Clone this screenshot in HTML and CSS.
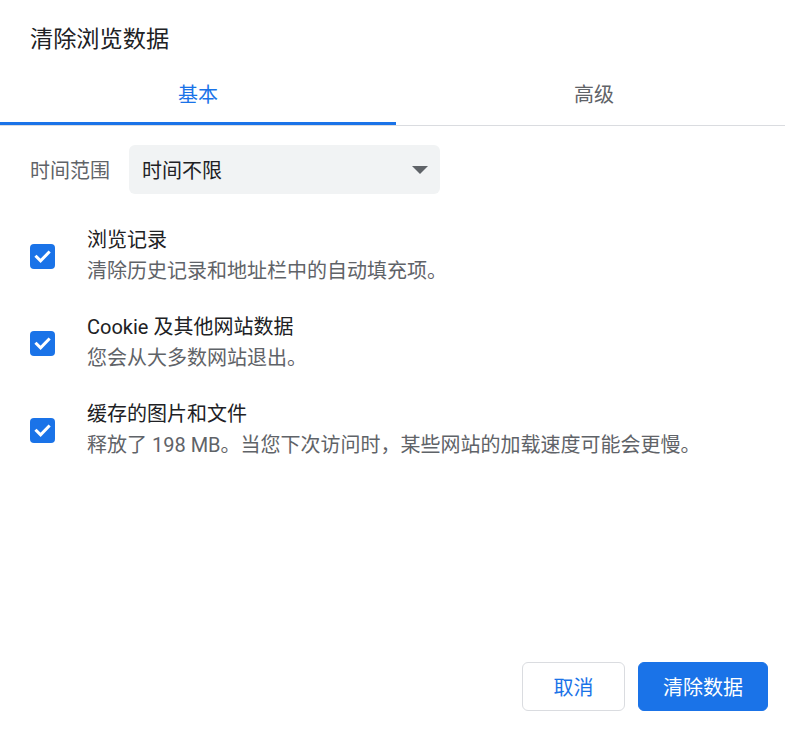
FILE: index.html
```html
<!DOCTYPE html>
<html lang="zh-CN">

<head>
    <meta charset="utf-8">
    <meta name="viewport" content="width=device-width, initial-scale=1.0">
    <title>清除浏览数据</title>
    <link rel="stylesheet" href="styles.css">
</head>

<body>
    <div class="dialog">
        <h1 class="titel">清除浏览数据</h1>

        <div class="faner">
            <button class="fane valgt">基本</button>
            <button class="fane">高级</button>
        </div>

        <main class="indhold">
            <div class="tidsrum">
                <span class="etiket">时间范围</span>
                <div class="vaelger">
                    <span>时间不限</span>
                    <span class="pil"></span>
                </div>
            </div>

            <div class="punkt">
                <span class="boks">
                    <svg width="25" height="25" viewBox="0 0 25 25"><path d="M6.5 12.8 L10.6 16.9 L18.6 8.6" fill="none" stroke="#fff" stroke-width="3" stroke-linecap="square"/></svg>
                </span>
                <div class="tekst">
                    <p class="navn">浏览记录</p>
                    <p class="beskrivelse">清除历史记录和地址栏中的自动填充项。</p>
                </div>
            </div>

            <div class="punkt">
                <span class="boks">
                    <svg width="25" height="25" viewBox="0 0 25 25"><path d="M6.5 12.8 L10.6 16.9 L18.6 8.6" fill="none" stroke="#fff" stroke-width="3" stroke-linecap="square"/></svg>
                </span>
                <div class="tekst">
                    <p class="navn">Cookie 及其他网站数据</p>
                    <p class="beskrivelse">您会从大多数网站退出。</p>
                </div>
            </div>

            <div class="punkt">
                <span class="boks">
                    <svg width="25" height="25" viewBox="0 0 25 25"><path d="M6.5 12.8 L10.6 16.9 L18.6 8.6" fill="none" stroke="#fff" stroke-width="3" stroke-linecap="square"/></svg>
                </span>
                <div class="tekst">
                    <p class="navn">缓存的图片和文件</p>
                    <p class="beskrivelse">释放了 198 MB。当您下次访问时，某些网站的加载速度可能会更慢。</p>
                </div>
            </div>
        </main>

        <footer class="knapper">
            <button class="knap annuller">取消</button>
            <button class="knap ryd">清除数据</button>
        </footer>
    </div>
</body>

</html>
```

FILE: styles.css
```css
body {
    margin: 0;
    overflow: hidden;
    background-color: #fff;
    font-family: Roboto, "Noto Sans CJK SC", sans-serif;
    color: #202124;
}

.dialog {
    width: 792px;
    height: 734px;
    display: flex;
    flex-direction: column;
}

.titel {
    margin: 0;
    padding: 24px 30px 0;
    font-size: 23.2px;
    font-weight: 400;
    line-height: 30px;
}

.faner {
    display: grid;
    grid-template-columns: 1fr 1fr;
    border-bottom: 1px solid #dadce0;
}

.fane {
    font-family: inherit;
    font-size: 20px;
    line-height: 30px;
    padding: 26px 0 12px;
    background: none;
    border: none;
    border-bottom: 3px solid transparent;
    color: #5f6368;
}

.fane.valgt {
    color: #1a73e8;
    border-bottom-color: #1a73e8;
}

.indhold {
    padding: 19px 30px 0;
    font-size: 20px;
}

.tidsrum {
    display: flex;
    align-items: center;
    gap: 19px;
}

.etiket {
    color: #5f6368;
}

.vaelger {
    box-sizing: border-box;
    width: 311px;
    height: 49px;
    padding: 0 12px 0 13px;
    display: flex;
    align-items: center;
    justify-content: space-between;
    background-color: #f1f3f4;
    border-radius: 6px;
}

.pil {
    width: 0;
    height: 0;
    border-left: 8px solid transparent;
    border-right: 8px solid transparent;
    border-top: 8px solid #5f6368;
}

.punkt {
    display: flex;
    align-items: center;
    gap: 32px;
    margin-top: 25px;
}

.tidsrum + .punkt {
    margin-top: 31px;
}

.boks {
    width: 25px;
    height: 25px;
    border-radius: 4px;
    background-color: #1a73e8;
    display: flex;
}

.tekst p {
    margin: 0;
    line-height: 31px;
}

.beskrivelse {
    color: #5f6368;
}

.knapper {
    margin-top: auto;
    padding: 0 24px 23px;
    display: flex;
    justify-content: flex-end;
    gap: 13px;
}

.knap {
    box-sizing: border-box;
    height: 49px;
    font-family: inherit;
    font-size: 20px;
    border-radius: 6px;
    padding: 0;
}

.annuller {
    width: 103px;
    background-color: #fff;
    border: 1px solid #dadce0;
    color: #1a73e8;
}

.ryd {
    width: 130px;
    background-color: #1a73e8;
    border: 1px solid #1a73e8;
    color: #fff;
}
```
